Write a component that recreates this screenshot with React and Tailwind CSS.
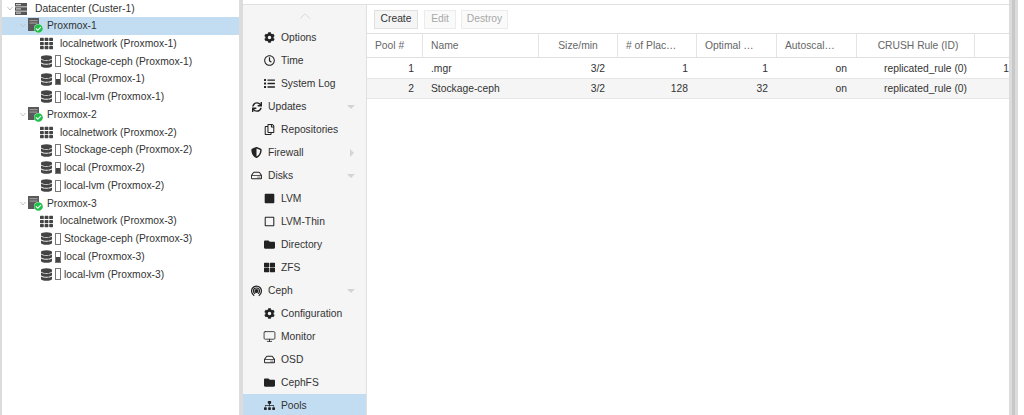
import {
  FaCog, FaRegClock, FaList, FaSync, FaRegCopy, FaShieldAlt, FaRegHdd, FaSquare, FaRegSquare, FaFolder, FaThLarge, FaSitemap, FaTh, FaDatabase, FaCheckCircle,
} from 'react-icons/fa'
import { Monitor, ChevronUp } from 'lucide-react'

const FONT = "font-['Liberation_Sans',Arial,sans-serif]"

function ServerIcon() {
  return (
    <svg width="12" height="12" viewBox="0 0 12 12" className="shrink-0">
      <rect x="0" y="0" width="12" height="3.500" fill="#555" />
      <rect x="0" y="4.250" width="12" height="3.500" fill="#555" />
      <rect x="0" y="8.500" width="12" height="3.500" fill="#555" />
      <rect x="1" y="1" width="5" height="1.200" fill="#ccc" />
      <rect x="1" y="5.300" width="5" height="1.200" fill="#ccc" />
      <rect x="1" y="9.500" width="5" height="1.200" fill="#ccc" />
    </svg>
  )
}

function NodeIcon() {
  return (
    <span className="relative block w-[15px] h-[15px] shrink-0">
      <svg width="11" height="13" viewBox="0 0 11 13">
        <rect width="11" height="13" fill="#5a5a5a" />
        <rect x="1.500" y="2" width="8" height="1.200" fill="#999" />
        <rect x="1.500" y="4.500" width="8" height="1.200" fill="#999" />
      </svg>
      <span className="absolute right-0 bottom-0 w-[9px] h-[9px] rounded-full bg-white flex items-center justify-center">
        <FaCheckCircle size={9} color="#21bf4b" />
      </span>
    </span>
  )
}

function StorageIcon({ level }) {
  return (
    <span className="flex items-center gap-[3px] shrink-0">
      <FaDatabase size={11} color="#444" className="w-[11px] h-[13px]" />
      <span className="relative block w-[6px] h-[12px] border border-[#777] bg-white">
        {level && <span className="absolute left-0 right-0 bottom-0 h-[5px] bg-[#444]" />}
      </span>
    </span>
  )
}

function Caret() {
  return (
    <svg width="6" height="5" viewBox="0 0 6 5" className="shrink-0">
      <path d="M.3.800 3 4 5.700.800" fill="none" stroke="#c4c4c4" strokeWidth="1" />
    </svg>
  )
}

function TreeRow({ indent, gap, icon, label }) {
  return (
    <div className={`flex items-center h-[17.75px] ${indent} ${gap}`}>
      {icon}
      <span className="whitespace-nowrap">{label}</span>
    </div>
  )
}

function NodeGroup({ n, selected }) {
  const name = `Proxmox-${n}`
  return (
    <>
      <div className={`flex items-center h-[17.75px] pl-[18px] ${selected ? 'bg-[#c2ddf2]' : ''}`}>
        <Caret />
        <span className="ml-[2px]"><NodeIcon /></span>
        <span className="ml-[4px]">{name}</span>
      </div>
      <TreeRow indent="pl-[38px]" gap="gap-[7px]" icon={<FaTh size={13} color="#444" />} label={`localnetwork (${name})`} />
      <TreeRow indent="pl-[39px]" gap="gap-[3px]" icon={<StorageIcon />} label={`Stockage-ceph (${name})`} />
      <TreeRow indent="pl-[39px]" gap="gap-[3px]" icon={<StorageIcon level />} label={`local (${name})`} />
      <TreeRow indent="pl-[39px]" gap="gap-[3px]" icon={<StorageIcon />} label={`local-lvm (${name})`} />
    </>
  )
}

function CephIcon() {
  return (
    <svg width="11" height="12" viewBox="0 0 12 12" fill="none" stroke="#222" strokeWidth="1.300">
      <path d="M3.500 11.300C1.500 9.800.6 8 .6 6a5.400 5.400 0 0 1 10.800 0c0 2-.9 3.800-2.900 5.300" />
      <path d="M4.500 9C3.300 8.300 2.700 7.200 2.700 6a3.300 3.300 0 0 1 6.600 0c0 1.200-.6 2.300-1.800 3" />
      <circle cx="6" cy="6" r="1.500" fill="#222" />
    </svg>
  )
}

const NAV = [
  { label: 'Options', icon: <FaCog size={11} />, sub: true },
  { label: 'Time', icon: <FaRegClock size={11} />, sub: true },
  { label: 'System Log', icon: <FaList size={11} />, sub: true },
  { label: 'Updates', icon: <FaSync size={10} />, caret: 'down' },
  { label: 'Repositories', icon: <FaRegCopy size={11} />, sub: true },
  { label: 'Firewall', icon: <FaShieldAlt size={11} />, caret: 'right' },
  { label: 'Disks', icon: <FaRegHdd size={11} />, caret: 'down' },
  { label: 'LVM', icon: <FaSquare size={11} />, sub: true },
  { label: 'LVM-Thin', icon: <FaRegSquare size={11} />, sub: true },
  { label: 'Directory', icon: <FaFolder size={11} />, sub: true },
  { label: 'ZFS', icon: <FaThLarge size={11} />, sub: true },
  { label: 'Ceph', icon: <CephIcon />, caret: 'down' },
  { label: 'Configuration', icon: <FaCog size={11} />, sub: true },
  { label: 'Monitor', icon: <Monitor size={13} strokeWidth={1.500} />, sub: true },
  { label: 'OSD', icon: <FaRegHdd size={11} />, sub: true },
  { label: 'CephFS', icon: <FaFolder size={11} />, sub: true },
  { label: 'Pools', icon: <FaSitemap size={11} />, sub: true, active: true },
]

function NavItem({ item }) {
  return (
    <div className={`flex items-center h-[23px] shrink-0 ${item.sub ? 'pl-[20px]' : 'pl-[7px]'} ${item.active ? 'bg-[#c2ddf2]' : ''}`}>
      <span className="w-[13px] h-[13px] flex items-center justify-center text-[#222] shrink-0">{item.icon}</span>
      <span className="ml-[5px]">{item.label}</span>
      {item.caret === 'down' && <span className="ml-auto mr-[11px] w-0 h-0 border-x-[4px] border-x-transparent border-t-[4px] border-t-[#d4d4d4]" />}
      {item.caret === 'right' && <span className="ml-auto mr-[12px] w-0 h-0 border-y-[4px] border-y-transparent border-l-[4px] border-l-[#d4d4d4]" />}
    </div>
  )
}

const COLS = [
  { label: 'Pool #', w: 'w-[56px]', cls: 'pl-2' },
  { label: 'Name', w: 'w-[116px]', cls: 'pl-2' },
  { label: 'Size/min', w: 'w-[79px]', cls: 'justify-center' },
  { label: '# of Plac…', w: 'w-[79px]', cls: 'pl-2' },
  { label: 'Optimal …', w: 'w-[80px]', cls: 'pl-2' },
  { label: 'Autoscal…', w: 'w-[80px]', cls: 'pl-2' },
  { label: 'CRUSH Rule (ID)', w: 'w-[118px]', cls: 'justify-center pl-[5px]' },
]

const POOLS = [
  { id: 1, name: '.mgr', size: '3/2', pg: 1, opt: 1, extra: '1' },
  { id: 2, name: 'Stockage-ceph', size: '3/2', pg: 128, opt: 32 },
]

function PoolRow({ pool, alt }) {
  return (
    <div className={`flex items-center border-b border-[#e6e6e6] whitespace-nowrap ${alt ? 'h-[20px] bg-[#f5f5f5]' : 'h-[21px] pt-[1px]'}`}>
      <span className="w-[56px] text-right pr-[9px] shrink-0">{pool.id}</span>
      <span className="w-[116px] pl-2 shrink-0">{pool.name}</span>
      <span className="w-[79px] text-right pr-[13px] shrink-0">{pool.size}</span>
      <span className="w-[79px] text-right pr-[9px] shrink-0">{pool.pg}</span>
      <span className="w-[80px] text-right pr-[9px] shrink-0">{pool.opt}</span>
      <span className="w-[80px] text-right pr-[10px] shrink-0">on</span>
      <span className="w-[118px] text-right pr-[8px] shrink-0">replicated_rule (0)</span>
      <span className="flex-1 text-right overflow-hidden">{pool.extra}</span>
    </div>
  )
}

export default function App() {
  return (
    <div className={`${FONT} flex w-[1024px] h-[415px] overflow-hidden bg-white text-[10.3px] text-[#333]`}>
      <div className="w-[2px] bg-[#dcdcdc] shrink-0" />

      <div className="w-[237px] shrink-0 overflow-hidden bg-white">
        <div className="flex items-center h-[17px] pl-[5px]">
          <Caret />
          <span className="ml-[2px]"><ServerIcon /></span>
          <span className="ml-[8px]">Datacenter (Custer-1)</span>
        </div>
        <NodeGroup n={1} selected />
        <NodeGroup n={2} />
        <NodeGroup n={3} />
      </div>

      <div className="w-[4px] bg-[#dcdcdc] shrink-0" />

      <div className="w-[766px] shrink-0 flex flex-col pt-[4px]">
        <div className="flex flex-1 min-h-0 border-t border-[#e0e0e0]">
          <div className="w-[124px] shrink-0 bg-[#f5f5f5] border-r border-[#e0e0e0] flex flex-col overflow-hidden">
            <div className="h-[21px] flex items-center justify-center shrink-0 text-[#d0d0d0]">
              <ChevronUp size={18} strokeWidth={1} />
            </div>
            {NAV.map(item => <NavItem key={item.label} item={item} />)}
          </div>

          <div className="w-[642px] shrink-0 flex flex-col overflow-hidden">
            <div className="h-[29px] flex items-center pl-[7px] border-b border-[#e0e0e0] shrink-0">
              <button className="w-[44px] h-[19px] text-[#333] bg-[#f5f5f5] border border-[#e0e0e0]">Create</button>
              <button className="w-[32px] h-[19px] ml-[6px] text-[#a8a8a8] bg-[#fafafa] border border-[#ececec]">Edit</button>
              <button className="w-[47px] h-[19px] ml-[5px] text-[#a8a8a8] bg-[#fafafa] border border-[#ececec]">Destroy</button>
            </div>
            <div className="flex h-[24px] border-b border-[#e0e0e0] shrink-0 text-[#666]">
              {COLS.map(c => (
                <div key={c.label} className={`${c.w} ${c.cls} shrink-0 flex items-center border-r border-[#e4e4e4] whitespace-nowrap`}>{c.label}</div>
              ))}
            </div>
            {POOLS.map((p, i) => <PoolRow key={p.id} pool={p} alt={i === 1} />)}
          </div>
        </div>
      </div>

      <div className="w-[9px] shrink-0 bg-[#c8c8c8] border-x-[3px] border-[#dcdcdc]" />
      <div className="flex-1 bg-white" />
    </div>
  )
}
